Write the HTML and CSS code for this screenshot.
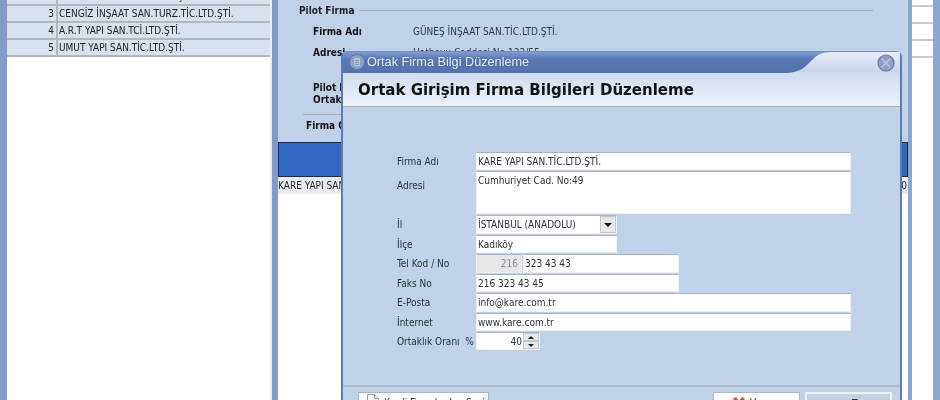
FILE: index.html
```html
<!DOCTYPE html>
<html lang="tr">
<head>
<meta charset="utf-8">
<title>Ortak Firma Bilgi Düzenleme</title>
<link rel="stylesheet" href="styles.css">
</head>
<body>
<div class="desk">
  <aside class="side">
    <div class="list">
      <div class="row"><span class="num">2</span><span class="name">FIRAT İZ YAPI SAN.TİC.LTD.ŞTİ.</span></div>
      <div class="row"><span class="num">3</span><span class="name">CENGİZ İNŞAAT SAN.TURZ.TİC.LTD.ŞTİ.</span></div>
      <div class="row"><span class="num">4</span><span class="name">A.R.T YAPI SAN.TCİ.LTD.ŞTİ.</span></div>
      <div class="row"><span class="num">5</span><span class="name">UMUT YAPI SAN.TİC.LTD.ŞTİ.</span></div>
    </div>
  </aside>

  <main class="main">
    <div class="section-head"><b>Pilot Firma</b><i class="rule"></i></div>
    <div class="info"><b>Firma Adı</b><span>GÜNEŞ İNŞAAT SAN.TİC.LTD.ŞTİ.</span></div>
    <div class="info info-addr"><b>Adresi</b><span>Hatboyu Caddesi No:123/55</span></div>
    <div class="info info-rate"><b>Pilot Firma<br>Ortaklık Oranı</b></div>
    <i class="rule rule-full"></i>
    <div class="section-sub"><b>Firma Ortakları</b></div>
    <div class="grid-head"></div>
    <div class="grid-row"><span>KARE YAPI SAN.TİC.LTD.ŞTİ.</span><span>40</span></div>
    <div class="grid-empty"></div>
  </main>

  <aside class="strip">
    <div class="cell"></div><div class="cell"></div><div class="cell"></div><div class="cell"></div>
  </aside>

  <section class="dialog">
    <header class="titlebar">
      <span class="tab-curve"><svg viewBox="0 0 490 21" width="490" height="21"><defs><linearGradient id="tb" x1="0" y1="0" x2="0" y2="1"><stop offset="0" stop-color="#7f9dd0"/><stop offset=".35" stop-color="#5a79b4"/><stop offset="1" stop-color="#5672ad"/></linearGradient></defs><path d="M0 0H490C478 0 474 3 468 9C462 15 458 20 444 21H0Z" fill="url(#tb)"/></svg></span>
      <span class="app-icon"><svg viewBox="0 0 16 16" width="16" height="16"><circle cx="8" cy="8" r="7.500" fill="#8fa3c6" stroke="#5f7aa8"/><path d="M5 4h6v8H5z" fill="#b9c6de"/><path d="M6 6.500h4M6 8.500h4M6 10.500h4" stroke="#7f94b9"/></svg></span>
      <span class="title-text">Ortak Firma Bilgi Düzenleme</span>
      <span class="close"><svg viewBox="0 0 18 18" width="18" height="18"><circle cx="9" cy="9" r="8" fill="#8ba0c8" stroke="#67799c" stroke-width="1.200"/><path d="M4.500 4.500l9 9M13.500 4.500l-9 9" stroke="#b7c6e2" stroke-width="1.500"/></svg></span>
    </header>
    <div class="heading">Ortak Girişim Firma Bilgileri Düzenleme</div>
    <form class="form">
      <label class="lab">Firma Adı</label><div class="field wide h18">KARE YAPI SAN.TİC.LTD.ŞTİ.</div>
      <label class="lab lab-addr">Adresi</label><div class="field wide h43">Cumhuriyet Cad. No:49</div>
      <label class="lab">İl</label>
      <div class="field mid h19 combo"><span>İSTANBUL (ANADOLU)</span><span class="drop"><svg viewBox="0 0 8 4" width="8" height="4"><path d="M0 0h8L4 4z" fill="#111"/></svg></span></div>
      <label class="lab">İlçe</label><div class="field mid h18">Kadıköy</div>
      <label class="lab">Tel Kod / No</label>
      <div class="pair"><div class="field code h19">216</div><div class="field phone h19">323 43 43</div></div>
      <label class="lab">Faks No</label><div class="field med h18">216 323 43 45</div>
      <label class="lab">E-Posta</label><div class="field wide h19">info@kare.com.tr</div>
      <label class="lab">İnternet</label><div class="field wide h18">www.kare.com.tr</div>
      <label class="lab">Ortaklık Oranı &nbsp;%</label>
      <div class="field spin h18"><span class="spin-val">40</span><span class="spin-btns"><i><svg viewBox="0 0 6 3" width="6" height="3"><path d="M0 3h6L3 0z" fill="#222"/></svg></i><i><svg viewBox="0 0 6 3" width="6" height="3"><path d="M0 0h6L3 3z" fill="#222"/></svg></i></span></div>
    </form>
    <footer class="foot">
      <button type="button" class="btn btn-credit"><svg viewBox="0 0 14 14" width="14" height="14"><path d="M1.500 .5h7l4 4v9h-11z" fill="#f5f7fb" stroke="#8b9ab8"/><path d="M8.500 .5v4h4" fill="#dfe6f2" stroke="#8b9ab8"/></svg><span>Kredi Firmalardan Seçin</span></button>
      <span class="spacer"></span>
      <button type="button" class="btn btn-cancel"><svg viewBox="0 0 14 14" width="14" height="14"><path d="M1 2l3-2 3 4 3-4 3 2-4 5 4 5-3 2-3-4-3 4-3-2 4-5z" fill="#e24a22"/></svg><span>Vazgeç</span></button>
      <button type="button" class="btn btn-ok"><svg viewBox="0 0 14 14" width="14" height="14"><path d="M1 8l2-2 3 3 5-7 2 2-7 10z" fill="#3d9a3a"/></svg><span>Tamam</span></button>
    </footer>
  </section>
</div>
</body>
</html>
```

FILE: styles.css
```css
* { box-sizing: border-box; }
html, body { margin: 0; height: 400px; overflow: hidden; background: #fff; }
body { font-family: "DejaVu Sans Condensed", "Noto Sans", sans-serif; font-size: 10px; color: #222; }
b { font-weight: 700; }
i { display: block; font-style: normal; }

.desk { position: relative; display: flex; width: 940px; height: 400px; overflow: hidden; filter: blur(.4px); }

.side { width: 272px; flex: none; background: #fff; border-left: 7px solid #7f9ccb; border-right: 2px solid #e9eef7; overflow: hidden; }
.list { margin-top: -11px; }
.row { display: flex; height: 17px; background: #d8e1f0; border-bottom: 2px solid #b3b7bd; line-height: 15px; }
.num { width: 51px; text-align: right; padding-right: 2px; border-right: 2px solid #b3b7bd; }
.name { padding-left: 1px; }

.main { width: 640px; flex: none; padding: 3px 0 0 21px; background: #c0d2ea; border-left: 6px solid #7f9ccb; border-right: 4px solid #8ca6d0; }
.section-head { display: flex; align-items: center; gap: 5px; height: 15px; width: 574px; }
.rule { flex: 1; height: 1px; background: #a6acb4; }
.info { display: flex; margin-left: 14px; height: 15px; margin-top: 6px; line-height: 15px; color: #334; }
.info b { width: 100px; color: #111; }
.info-addr { margin-top: 6px; }
.info-rate { margin-top: 22px; height: 26px; line-height: 12px; }
.rule-full { width: 570px; flex: none; margin: 6px 0 0 4px; }
.section-sub { margin: 4px 0 0 7px; height: 14px; line-height: 14px; color: #111; }
.grid-head { height: 35px; margin: 9px 0 0 -21px; background: #3068c4; border: 1px solid #1d2b49; }
.grid-row { display: flex; justify-content: space-between; height: 17px; margin-left: -21px; background: #e9edf3; line-height: 17px; white-space: nowrap; padding-right: 1px; }
.grid-empty { height: 220px; margin-left: -21px; background: #fff; }

.strip { flex: 1; background: #fff; border-right: 7px solid #8ca6d0; }
.strip .cell { height: 17px; border-bottom: 2px solid #c8cbd0; }
.strip .cell:first-child { height: 7px; }

.dialog { position: absolute; left: 341px; top: 51px; width: 561px; height: 360px; display: flex; flex-direction: column; background: #bfd2ea; border: 2px solid #5b7db5; border-top: 1px solid #6f8fc4; border-radius: 6px 6px 0 0; }
.titlebar { position: relative; display: flex; align-items: center; height: 20px; flex: none; background: linear-gradient(#e9edf8, #c9d3ea); }
.tab-curve { position: absolute; left: 0; top: 0; display: flex; }
.app-icon { position: relative; display: flex; margin-left: 6px; }
.title-text { position: relative; margin-left: 2px; font-family: "Liberation Sans", sans-serif; font-size: 12.700px; color: #e8eefa; text-shadow: 0 0 2px #3b5687; }
.close { position: absolute; right: 5px; top: 2px; display: flex; }
.heading { flex: none; height: 35px; padding-left: 15px; background: linear-gradient(#cfdbef, #eef2fb); border-bottom: 1px solid #a8adb5; font-family: "DejaVu Sans", sans-serif; font-size: 15px; font-weight: 700; color: #111; line-height: 36px; white-space: nowrap; }

.form { flex: none; height: 278px; display: grid; grid-template-columns: 79px 1fr; row-gap: 1px; align-content: start; padding: 45px 0 0 54px; }
.lab { color: #2a2f3a; padding-top: 1px; line-height: 17px; white-space: nowrap; }
.lab-addr { padding-top: 6px; }
.field { background: #fff; border: 1px solid #eef0f3; border-top-color: #acb1b8; padding-left: 1px; line-height: 17px; white-space: nowrap; color: #2a2f3a; }
.h18 { height: 18px; } .h19 { height: 19px; } .h43 { height: 43px; }
.wide { width: 375px; } .mid { width: 141px; } .med { width: 203px; }
.combo { display: flex; justify-content: space-between; }
.drop { width: 16px; display: flex; align-items: center; justify-content: center; background: #e6e8ec; border: 1px solid #c4c8ce; }
.pair { display: flex; gap: 1px; }
.code { width: 46px; background: #e4e6ea; color: #8a8d92; text-align: right; padding-right: 3px; }
.phone { width: 156px; }
.spin { width: 64px; display: flex; padding: 0; }
.spin-val { flex: 1; text-align: right; padding-right: 1px; }
.spin-btns { width: 16px; display: flex; flex-direction: column; background: #e6e8ec; }
.spin-btns i { flex: 1; display: flex; align-items: center; justify-content: center; border: 1px solid #c4c8ce; }

.foot { display: flex; gap: 5px; padding: 5px 8px 0 15px; border-top: 2px solid #aebccf; flex: 1; }
.spacer { flex: 1; }
.btn { display: flex; align-items: flex-start; height: 30px; margin: 0; padding: 4px 0 0; background: #fff; border: 1px solid #aab4c4; font: inherit; color: #2a2f3a; white-space: nowrap; }
.btn svg { flex: none; margin-top: -3px; margin-right: 4px; }
.btn-credit { width: 131px; padding-left: 7px; }
.btn-cancel { width: 87px; padding-left: 18px; }
.btn-cancel svg { margin-top: 0; }
.btn-ok { width: 87px; padding-left: 27px; background: #c6d0e4; border: 2px solid #eef1f6; }
.btn-ok svg { margin-top: 0; }
```
